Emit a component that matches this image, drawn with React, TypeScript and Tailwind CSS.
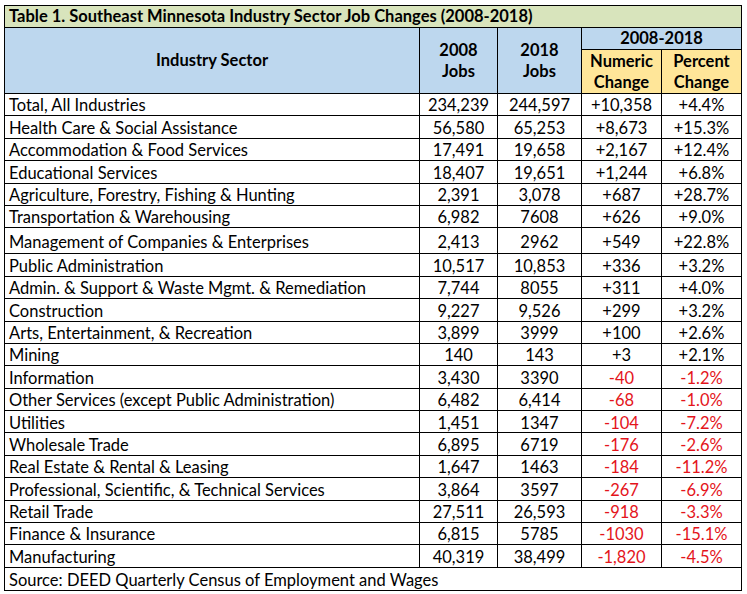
import React from "react";

type Row = [string, string, string, string, string, boolean?];

const rows: Row[] = [
  ["Total, All Industries", "234,239", "244,597", "+10,358", "+4.4%"],
  ["Health Care & Social Assistance", "56,580", "65,253", "+8,673", "+15.3%"],
  ["Accommodation & Food Services", "17,491", "19,658", "+2,167", "+12.4%"],
  ["Educational Services", "18,407", "19,651", "+1,244", "+6.8%"],
  ["Agriculture, Forestry, Fishing & Hunting", "2,391", "3,078", "+687", "+28.7%"],
  ["Transportation & Warehousing", "6,982", "7608", "+626", "+9.0%"],
  ["Management of Companies & Enterprises", "2,413", "2962", "+549", "+22.8%", true],
  ["Public Administration", "10,517", "10,853", "+336", "+3.2%"],
  ["Admin. & Support & Waste Mgmt. & Remediation", "7,744", "8055", "+311", "+4.0%"],
  ["Construction", "9,227", "9,526", "+299", "+3.2%"],
  ["Arts, Entertainment, & Recreation", "3,899", "3999", "+100", "+2.6%"],
  ["Mining", "140", "143", "+3", "+2.1%"],
  ["Information", "3,430", "3390", "-40", "-1.2%"],
  ["Other Services (except Public Administration)", "6,482", "6,414", "-68", "-1.0%"],
  ["Utilities", "1,451", "1347", "-104", "-7.2%"],
  ["Wholesale Trade", "6,895", "6719", "-176", "-2.6%"],
  ["Real Estate & Rental & Leasing", "1,647", "1463", "-184", "-11.2%"],
  ["Professional, Scientific, & Technical Services", "3,864", "3597", "-267", "-6.9%"],
  ["Retail Trade", "27,511", "26,593", "-918", "-3.3%"],
  ["Finance & Insurance", "6,815", "5785", "-1030", "-15.1%"],
  ["Manufacturing", "40,319", "38,499", "-1,820", "-4.5%"],
];

const cell = "border border-black px-[4px] leading-none";

function TwoLine({ top, bottom }: { top: string; bottom: string }) {
  return (
    <div className="flex flex-col items-center gap-[4px]">
      <div className="leading-none">{top}</div>
      <div className="leading-none">{bottom}</div>
    </div>
  );
}

export default function App() {
  return (
    <div className="bg-white w-[747px] h-[594px] pl-[4px] pt-[5px] font-['Lato','Liberation_Sans',sans-serif] text-[16.5px] text-black">
      <table className="table-fixed border-collapse w-[737px]">
        <colgroup>
          <col className="w-[415px]" />
          <col className="w-[78px]" />
          <col className="w-[84px]" />
          <col className="w-[80px]" />
          <col className="w-[80px]" />
        </colgroup>
        <tbody>
          <tr className="h-[22px] bg-[#d8e4bc]">
            <td colSpan={5} className={`${cell} font-bold text-left`}>
              Table 1. Southeast Minnesota Industry Sector Job Changes (2008-2018)
            </td>
          </tr>
          <tr className="h-[22px] bg-[#bdd7ee] font-bold text-center">
            <td rowSpan={2} className={cell}>Industry Sector</td>
            <td rowSpan={2} className={cell}>
              <TwoLine top="2008" bottom="Jobs" />
            </td>
            <td rowSpan={2} className={cell}>
              <TwoLine top="2018" bottom="Jobs" />
            </td>
            <td colSpan={2} className={cell}>2008-2018</td>
          </tr>
          <tr className="h-[44px] font-bold text-center">
            <td className={`${cell} bg-[#ffe699]`}>
              <TwoLine top="Numeric" bottom="Change" />
            </td>
            <td className={`${cell} bg-[#ffe699]`}>
              <TwoLine top="Percent" bottom="Change" />
            </td>
          </tr>
          {rows.map(([name, a, b, n, p, tall]) => {
            const neg = n.startsWith("-");
            return (
              <tr key={name} className={tall ? "h-[26px]" : "h-[22.4px]"}>
                <td className={`${cell} text-left pt-[2px]`}>{name}</td>
                <td className={`${cell} text-center pt-[2px]`}>{a}</td>
                <td className={`${cell} text-center pt-[2px]`}>{b}</td>
                <td className={`${cell} text-center pt-[2px] ${neg ? "text-[#e4141b]" : ""}`}>{n}</td>
                <td className={`${cell} text-center pt-[2px] ${neg ? "text-[#e4141b]" : ""}`}>{p}</td>
              </tr>
            );
          })}
          <tr className="h-[23px]">
            <td colSpan={5} className={`${cell} text-left pt-[2px]`}>
              Source: DEED Quarterly Census of Employment and Wages
            </td>
          </tr>
        </tbody>
      </table>
    </div>
  );
}
